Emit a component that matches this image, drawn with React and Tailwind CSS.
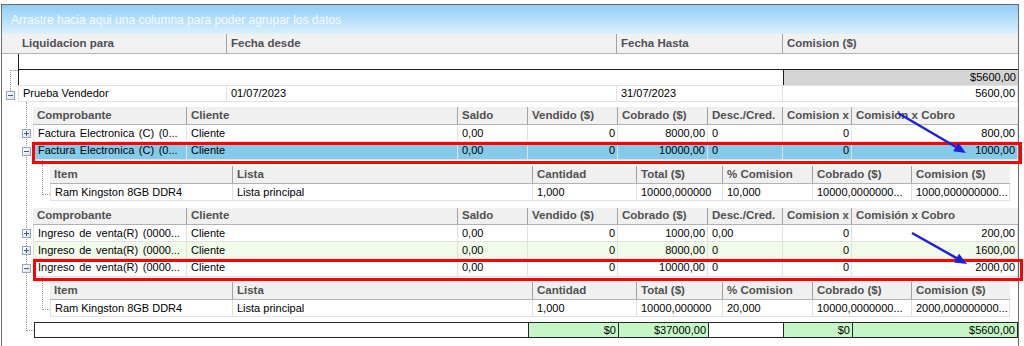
import React from "react";

const topCols = [
  { w: "w-[209px]", label: "Liquidacion para" },
  { w: "w-[390px]", label: "Fecha desde" },
  { w: "w-[166px]", label: "Fecha Hasta" },
  { w: "w-[235px]", label: "Comision ($)" },
];

const childCols = [
  { w: "w-[154px]", label: "Comprobante", a: "l" },
  { w: "w-[271px]", label: "Cliente", a: "l" },
  { w: "w-[70px]", label: "Saldo", a: "l" },
  { w: "w-[90px]", label: "Vendido ($)", a: "r" },
  { w: "w-[90px]", label: "Cobrado ($)", a: "r" },
  { w: "w-[75px]", label: "Desc./Cred.", a: "l" },
  { w: "w-[69px]", label: "Comision x", a: "r" },
  { w: "w-[166px]", label: "Comisión x Cobro", a: "r" },
];

const detailCols = [
  { w: "w-[183px]", label: "Item", a: "l" },
  { w: "w-[300px]", label: "Lista", a: "l" },
  { w: "w-[104px]", label: "Cantidad", a: "l" },
  { w: "w-[86px]", label: "Total ($)", a: "l" },
  { w: "w-[90px]", label: "% Comision", a: "l" },
  { w: "w-[99px]", label: "Cobrado ($)", a: "l" },
  { w: "w-[98px]", label: "Comision ($)", a: "l" },
];

const Expander = ({ open }) => (
  <svg width="9" height="9" viewBox="0 0 9 9" className="shrink-0 block">
    <defs>
      <linearGradient id="expg" x1="0" y1="0" x2="1" y2="1">
        <stop offset="0" stopColor="#ffffff" />
        <stop offset="1" stopColor="#d9e0ea" />
      </linearGradient>
    </defs>
    <rect x="0.5" y="0.5" width="8" height="8" fill="url(#expg)" stroke="#98a6ba" />
    <path d="M2 4.5h5" stroke="#3d5c99" />
    {!open && <path d="M4.5 2v5" stroke="#3d5c99" />}
  </svg>
);

const HeadCell = ({ w, label, last }) => (
  <div
    className={`${w} h-full shrink-0 flex items-center pl-[4px] overflow-hidden whitespace-nowrap text-[11.5px] font-bold text-[#505050] ${
      last ? "" : "border-r border-[#a3a3a3]"
    }`}
  >
    {label}
  </div>
);

const Cell = ({ w, a, children, first }) => (
  <div
    className={`${w} h-full shrink-0 flex items-center border-r border-[#e1e1e1] overflow-hidden whitespace-nowrap ${
      a === "r" ? "justify-end pr-[2px]" : "pl-[4px]"
    } ${first ? "border-l" : ""}`}
  >
    {children}
  </div>
);

const ChildHeader = ({ h }) => (
  <div className={`flex ${h} ml-[6px] bg-[#f0f0f0] border-b border-[#b2b2b2]`}>
    {childCols.map((c, i) => (
      <HeadCell key={c.label} w={c.w} label={c.label} last={i === childCols.length - 1} />
    ))}
  </div>
);

const ChildRow = ({ h, values, open, bg }) => (
  <div className={`flex items-center ${h}`}>
    <div className="-ml-[5px] mr-[2px]">
      <Expander open={open} />
    </div>
    <div className={`flex h-full border-b border-[#e1e1e1] ${bg}`}>
      {childCols.map((c, i) => (
        <Cell key={c.label} w={c.w} a={c.a} first={i === 0}>
          {i === 0 ? <span className="[word-spacing:1.5px]">{values[i]}</span> : values[i]}
        </Cell>
      ))}
    </div>
  </div>
);

const DetailBlock = ({ treeH, pt, values }) => (
  <div className="flex items-start">
    <div className={`ml-[15px] w-[8px] ${treeH} shrink-0 border-l border-b border-dotted border-[#9a9a9a]`} />
    <div className={`flex flex-col ${pt}`}>
      <div className="flex h-[18px] bg-[#f0f0f0] border-b border-[#b2b2b2]">
        {detailCols.map((c, i) => (
          <HeadCell key={c.label} w={c.w} label={c.label} last={i === detailCols.length - 1} />
        ))}
      </div>
      <div className="flex h-[17px] border-b border-[#e1e1e1] bg-white">
        {detailCols.map((c, i) => (
          <Cell key={c.label} w={c.w} a={c.a} first={i === 0}>
            {values[i]}
          </Cell>
        ))}
      </div>
    </div>
  </div>
);

export default function App() {
  return (
    <div className="relative w-[1024px] h-[346px] bg-white overflow-hidden pt-[4px] pl-[1px] font-['Liberation_Sans',Arial,sans-serif] text-[11px] text-black">
      <div className="w-[1018px] h-[342px] border-l border-t border-r border-[#6b6b6b] flex flex-col">
        {/* group by panel */}
        <div className="h-[29px] shrink-0 bg-linear-to-b from-[#8fcef5] to-[#dcf0fc] flex items-center pl-[9px] text-[12px] text-[#f4faff]">
          Arrastre hacia aqui una columna para poder agrupar los datos
        </div>

        {/* top band header */}
        <div className="flex h-[20px] shrink-0 bg-[#f1f1f1] border-b border-[#b2b2b2]">
          <div className="w-[16px] shrink-0" />
          {topCols.map((c, i) => (
            <HeadCell key={c.label} w={c.w} label={c.label} last={i === topCols.length - 1} />
          ))}
        </div>

        {/* top band rows */}
        <div className="flex shrink-0">
          <div className="w-[16px] shrink-0 flex flex-col">
            <div className="h-[16px]" />
            <div className="h-[21px] ml-[8px] border-l border-t border-dotted border-[#9a9a9a]" />
            <div className="ml-[4px]">
              <Expander open />
            </div>
          </div>
          <div className="w-[1000px] flex flex-col">
            <div className="h-[16px] border-l border-b border-[#1e1e1e]" />
            <div className="h-[16px] flex border-b border-[#e1e1e1]">
              <div className="w-[765px] h-full border-l border-[#1e1e1e]" />
              <div className="w-[235px] h-full flex items-center justify-end pr-[2px] bg-[#d4d4d4] border-l border-[#1e1e1e]">
                $5600,00
              </div>
            </div>
            <div className="h-[16px] flex border-b border-[#e1e1e1]">
              <Cell w="w-[209px]" a="l" first>
                Prueba Vendedor
              </Cell>
              <Cell w="w-[390px]" a="l">
                01/07/2023
              </Cell>
              <Cell w="w-[166px]" a="l">
                31/07/2023
              </Cell>
              <Cell w="w-[235px]" a="r">
                5600,00
              </Cell>
            </div>
          </div>
        </div>

        {/* child band */}
        <div className="ml-[24px] border-l border-dotted border-[#9a9a9a] flex flex-col pt-[5px] pb-[5px] shrink-0">
          <ChildHeader h="h-[18px]" />
          <ChildRow
            h="h-[17px]"
            bg="bg-white"
            values={["Factura Electronica (C) (0...", "Cliente", "0,00", "0", "8000,00", "0", "0", "800,00"]}
          />
          <ChildRow
            h="h-[18px]"
            open
            bg="bg-[#83cbe9]"
            values={["Factura Electronica (C) (0...", "Cliente", "0,00", "0", "10000,00", "0", "0", "1000,00"]}
          />
          <DetailBlock
            treeH="h-[35px]"
            pt="pt-[6px]"
            values={["Ram Kingston 8GB DDR4", "Lista principal", "1,000", "10000,000000", "10,000", "10000,0000000...", "1000,000000000..."]}
          />

          <div className="mt-[7px]">
            <ChildHeader h="h-[17px]" />
          </div>
          <ChildRow
            h="h-[17px]"
            bg="bg-white"
            values={["Ingreso de venta(R) (0000...", "Cliente", "0,00", "0", "1000,00", "0,00", "0", "200,00"]}
          />
          <ChildRow
            h="h-[17px]"
            bg="bg-[#f1fbe9]"
            values={["Ingreso de venta(R) (0000...", "Cliente", "0,00", "0", "8000,00", "0", "0", "1600,00"]}
          />
          <ChildRow
            h="h-[18px]"
            open
            bg="bg-white"
            values={["Ingreso de venta(R) (0000...", "Cliente", "0,00", "0", "10000,00", "0", "0", "2000,00"]}
          />
          <DetailBlock
            treeH="h-[33px]"
            pt="pt-[5px]"
            values={["Ram Kingston 8GB DDR4", "Lista principal", "1,000", "10000,000000", "20,000", "10000,0000000...", "2000,000000000..."]}
          />
        </div>

        {/* summary footer */}
        <div className="flex items-start shrink-0">
          <div className="ml-[24px] w-[8px] h-[9px] border-l border-b border-dotted border-[#9a9a9a]" />
          <div className="w-[984px] h-[16px] flex border border-[#262626]">
            <div className="w-[493px] h-full" />
            <div className="w-[90px] h-full flex items-center justify-end pr-[2px] bg-[#c5f6c5] border-l border-[#262626]">$0</div>
            <div className="w-[90px] h-full flex items-center justify-end pr-[2px] bg-[#c5f6c5] border-l border-[#262626]">$37000,00</div>
            <div className="w-[75px] h-full border-l border-[#262626]" />
            <div className="w-[69px] h-full flex items-center justify-end pr-[2px] bg-[#c5f6c5] border-l border-[#262626]">$0</div>
            <div className="w-[165px] h-full flex items-center justify-end pr-[2px] bg-[#c5f6c5] border-l border-[#262626]">$5600,00</div>
          </div>
        </div>
      </div>

      {/* annotations */}
      <div className="absolute left-[32px] top-[142px] w-[990px] h-[22px] border-[3px] border-[#ff0000] pointer-events-none" />
      <div className="absolute left-[33px] top-[259px] w-[990px] h-[22px] border-[3px] border-[#ff0000] pointer-events-none" />
      <svg className="absolute left-0 top-0 pointer-events-none" width="1024" height="346" viewBox="0 0 1024 346">
        <line x1="898" y1="113" x2="956" y2="147" stroke="#1d22d9" strokeWidth="2.5" />
        <polygon points="966,153 953.2,151.2 958.2,142.6" fill="#1d22d9" />
        <line x1="912" y1="233" x2="957" y2="258.3" stroke="#1d22d9" strokeWidth="2.5" />
        <polygon points="967,264 954,262.5 959,253.7" fill="#1d22d9" />
      </svg>
    </div>
  );
}
